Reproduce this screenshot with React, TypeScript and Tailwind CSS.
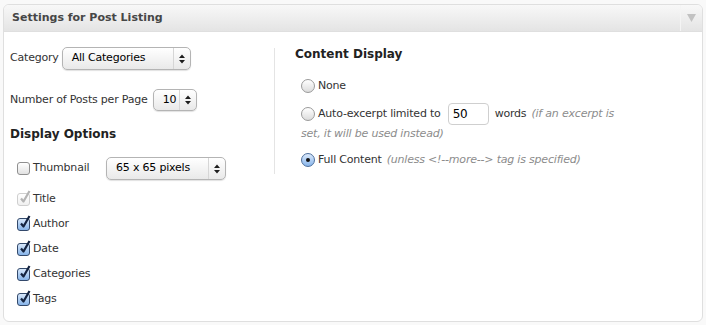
import React from "react";

function Select({ value, className }: { value: string; className: string }) {
  return (
    <div
      className={`flex items-center rounded-[5px] border border-[#b4b4b4] bg-gradient-to-b from-white to-[#e9e9e9] shadow-[0_1px_1px_rgba(0,0,0,0.12)] ${className}`}
    >
      <span className="flex-1 pl-[9px] text-black whitespace-nowrap">{value}</span>
      <span className="flex items-center justify-center w-[17px] h-full border-l border-[#d6d6d6]">
        <svg width="6" height="10" viewBox="0 0 6 10">
          <path d="M3 0.5L6 4H0z M0 6h6L3 9.5z" fill="#1e1e1e" />
        </svg>
      </span>
    </div>
  );
}

function Check({ state }: { state: "on" | "off" | "disabled" }) {
  if (state === "off") {
    return (
      <span className="block w-[13px] h-[13px] rounded-[3px] border border-[#8f8f8f] bg-gradient-to-b from-white to-[#e2e2e2]" />
    );
  }
  const disabled = state === "disabled";
  return (
    <span className="relative block w-[13px] h-[13px]">
      <span
        className={
          disabled
            ? "block w-[13px] h-[13px] rounded-[3px] border border-[#cfcfcf] bg-gradient-to-b from-white to-[#f0f0f0]"
            : "block w-[13px] h-[13px] rounded-[3px] border border-[#33496b] bg-gradient-to-b from-[#d8e8fb] to-[#86b3e8]"
        }
      />
      <svg className="absolute left-[1px] top-[-4px]" width="14" height="16" viewBox="0 0 14 16">
        <path
          d="M3 9.5L5.5 12.5L11.5 2"
          fill="none"
          stroke={disabled ? "#b4b4b4" : "#142340"}
          strokeWidth="2.2"
          strokeLinejoin="round"
        />
      </svg>
    </span>
  );
}

function Radio({ on }: { on?: boolean }) {
  return (
    <span
      className={
        on
          ? "flex shrink-0 items-center justify-center w-[14px] h-[14px] rounded-full border border-[#4d6f9c] bg-gradient-to-b from-[#dbe9fb] to-[#88b5ea]"
          : "flex shrink-0 items-center justify-center w-[14px] h-[14px] rounded-full border border-[#9a9a9a] bg-gradient-to-b from-white to-[#dcdcdc]"
      }
    >
      {on && <span className="block w-[4px] h-[4px] rounded-full bg-[#111]" />}
    </span>
  );
}

function CheckRow({ label, state }: { label: string; state: "on" | "off" | "disabled" }) {
  return (
    <div className="flex items-center h-[25px] pl-[7px] gap-[3px]">
      <Check state={state} />
      <span>{label}</span>
    </div>
  );
}

export default function App() {
  return (
    <div className="w-[706px] h-[325px] bg-[#f9f9f9] pt-[4px] pl-[3px] font-['DejaVu_Sans',sans-serif] text-[11px] tracking-[-0.2px] text-[#333]">
      <div className="w-[700px] h-[318px] rounded-[6px] border border-[#dfdfdf] bg-white overflow-hidden">
        <div className="flex h-[27px] border-b border-[#dfdfdf] bg-gradient-to-b from-[#f8f8f8] to-[#e4e4e4]">
          <h3 className="flex-1 pl-[8px] leading-[26px] text-[11px] tracking-normal font-bold text-[#464646]">
            Settings for Post Listing
          </h3>
          <div className="flex items-center justify-center w-[22px] border-l border-[#f4f4f4]">
            <svg width="9" height="8" viewBox="0 0 9 8">
              <path d="M0 0h9L4.5 8z" fill="#c2c2c2" />
            </svg>
          </div>
        </div>

        <div className="flex">
          <div className="w-[270px] pl-[6px] pt-[15px]">
            <div className="flex items-center gap-[3px] h-[23px]">
              <span>Category</span>
              <Select value="All Categories" className="w-[129px] h-[23px]" />
            </div>
            <div className="flex items-center gap-[5px] h-[22px] mt-[19px]">
              <span>Number of Posts per Page</span>
              <Select value="10" className="w-[44px] h-[22px]" />
            </div>
            <h4 className="mt-[12px] h-[22px] leading-[22px] text-[12px] tracking-normal font-bold text-[#222]">
              Display Options
            </h4>
            <div className="flex items-center h-[23px] mt-[12px] pl-[7px]">
              <Check state="off" />
              <span className="ml-[3px] w-[73px]">Thumbnail</span>
              <Select value="65 x 65 pixels" className="w-[120px] h-[23px]" />
            </div>
            <div className="mt-[7px]">
              <CheckRow label="Title" state="disabled" />
              <CheckRow label="Author" state="on" />
              <CheckRow label="Date" state="on" />
              <CheckRow label="Categories" state="on" />
              <CheckRow label="Tags" state="on" />
            </div>
          </div>

          <div className="self-start mt-[16px] h-[126px] border-l border-[#e4e4e4]" />

          <div className="flex-1 pl-[20px] pt-[11px]">
            <h4 className="h-[22px] leading-[22px] text-[12px] tracking-normal font-bold text-[#222]">
              Content Display
            </h4>
            <div className="pl-[6px] mt-[11px]">
              <div className="flex items-center gap-[3px] h-[20px]">
                <Radio />
                <span>None</span>
              </div>
              <div className="flex items-center gap-[3px] h-[22px] mt-[7px]">
                <Radio />
                <span>Auto-excerpt limited to</span>
                <span className="ml-[4px] flex items-center w-[41px] h-[22px] rounded-[4px] border border-[#cfcfcf] pl-[4px] text-[12px] text-black bg-white">
                  50
                </span>
                <span className="ml-[3px]">words</span>
                <span className="ml-[2px] italic text-[#8c8c8c]">(if an excerpt is</span>
              </div>
              <div className="h-[16px] leading-[16px] mt-[1px] italic text-[#8c8c8c]">
                set, it will be used instead)
              </div>
              <div className="flex items-center gap-[3px] h-[20px] mt-[8px]">
                <Radio on />
                <span>Full Content</span>
                <span className="ml-[2px] italic text-[#8c8c8c]">
                  (unless &lt;!--more--&gt; tag is specified)
                </span>
              </div>
            </div>
          </div>
        </div>
      </div>
    </div>
  );
}
